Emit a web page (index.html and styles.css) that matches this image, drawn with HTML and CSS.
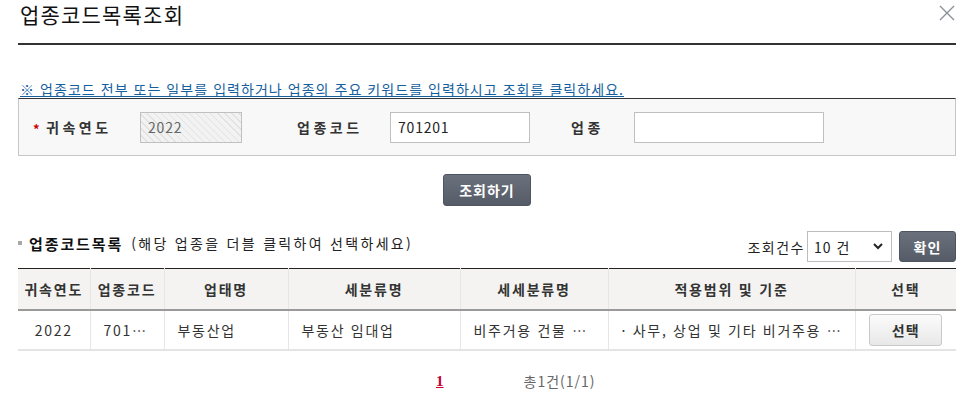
FILE: index.html
```html
<!DOCTYPE html>
<html lang="ko">

<head>
    <meta charset="UTF-8">
    <meta name="viewport" content="width=device-width, initial-scale=1.0">
    <title>업종코드목록조회</title>
    <link rel="stylesheet" href="styles.css">
</head>

<body>

    <div class="popup">
        <div class="pop-head">
            <h1 class="pop-title">업종코드목록조회</h1>
            <button class="btn-close" title="닫기">
                <svg width="16" height="16" viewBox="0 0 16 16">
                    <path d="M1 1 L15 15 M15 1 L1 15" stroke="#8b909a" stroke-width="1.4" fill="none" />
                </svg>
            </button>
        </div>

        <p class="notice">※ 업종코드 전부 또는 일부를 입력하거나 업종의 주요 키워드를 입력하시고 조회를 클릭하세요.</p>

        <div class="search-box">
            <span class="req">*</span>
            <label class="lbl lbl-year">귀속연도</label>
            <input class="inp inp-year" type="text" value="2022" disabled>
            <label class="lbl lbl-code">업종코드</label>
            <input class="inp inp-code" type="text" value="701201">
            <label class="lbl lbl-name">업종</label>
            <input class="inp inp-name" type="text" value="">
        </div>

        <div class="btn-row">
            <button class="btn-dark btn-search">조회하기</button>
        </div>

        <div class="list-head">
            <h2 class="list-title">
                <span class="bullet"></span>
                <strong>업종코드목록</strong>
                <span class="list-desc">(해당 업종을 더블 클릭하여 선택하세요)</span>
            </h2>
            <div class="list-opt">
                <span class="opt-label">조회건수</span>
                <div class="sel-wrap">
                    <select class="sel-count">
                        <option>10 건</option>
                        <option>20 건</option>
                        <option>50 건</option>
                    </select>
                    <svg class="sel-arrow" width="10" height="7" viewBox="0 0 10 7">
                        <path d="M1 1 L5 5 L9 1" stroke="#222" stroke-width="2" fill="none" />
                    </svg>
                </div>
                <button class="btn-dark btn-ok">확인</button>
            </div>
        </div>

        <table class="list-table">
            <colgroup>
                <col style="width: 72px">
                <col style="width: 74px">
                <col style="width: 124px">
                <col style="width: 172px">
                <col style="width: 148px">
                <col style="width: 247px">
                <col style="width: 101px">
            </colgroup>
            <thead>
                <tr>
                    <th>귀속연도</th>
                    <th>업종코드</th>
                    <th>업태명</th>
                    <th>세분류명</th>
                    <th>세세분류명</th>
                    <th>적용범위 및 기준</th>
                    <th>선택</th>
                </tr>
            </thead>
            <tbody>
                <tr>
                    <td class="center">2022</td>
                    <td>701201</td>
                    <td>부동산업</td>
                    <td>부동산 임대업</td>
                    <td>비주거용 건물 임대업</td>
                    <td>· 사무, 상업 및 기타 비거주용 건물 임대</td>
                    <td class="center"><button class="btn-light">선택</button></td>
                </tr>
            </tbody>
        </table>

        <div class="paging">
            <a class="page-on" href="#">1</a>
            <span class="total">총1건(1/1)</span>
        </div>
    </div>

</body>

</html>
```

FILE: styles.css
```css
body {
    margin: 0;
    background-color: #fff;
    font-family: "Noto Sans CJK KR", "Noto Sans", sans-serif;
    font-size: 14px;
    color: #333;
}

button,
input,
select {
    font-family: inherit;
}

.popup {
    padding: 0 14px 0 18px;
}

.pop-head {
    position: relative;
    height: 43px;
    border-bottom: 2px solid #333;
}

.pop-title {
    margin: 0;
    padding: 0 0 0 2px;
    font-size: 21px;
    font-weight: normal;
    line-height: 28px;
    letter-spacing: 1.2px;
    color: #111;
}

.btn-close {
    position: absolute;
    top: 5px;
    right: 1px;
    width: 16px;
    height: 16px;
    padding: 0;
    border: 0;
    background: none;
    cursor: pointer;
}

.btn-close svg {
    display: block;
}

.notice {
    margin: 35px 0 0 0;
    padding-left: 2px;
    height: 18px;
    line-height: 18px;
    font-size: 14px;
    letter-spacing: 1.05px;
    color: #14609e;
    text-decoration: underline;
    white-space: nowrap;
}

.search-box {
    display: flex;
    align-items: center;
    height: 56px;
    padding-left: 14px;
    border: 1px solid #c6c6c6;
    border-top: 1px solid #333;
    background-color: #f8f8f8;
}

.req {
    width: 13px;
    color: #d10000;
    font-weight: bold;
    font-size: 13px;
    line-height: 10px;
    padding-top: 4px;
}

.lbl {
    font-weight: bold;
    letter-spacing: 3.5px;
    color: #333;
    white-space: nowrap;
}

.lbl-year {
    width: 94px;
}

.lbl-code {
    margin-left: 55px;
    width: 93px;
}

.lbl-name {
    margin-left: 41px;
    width: 63px;
}

.inp {
    box-sizing: border-box;
    height: 31px;
    padding: 0 7px;
    border: 1px solid #c0c0c0;
    background-color: #fff;
    font-size: 14px;
    letter-spacing: 0.8px;
    color: #222;
    outline: none;
}

.inp-year {
    width: 102px;
    color: #666;
    -webkit-text-fill-color: #666;
    background: repeating-linear-gradient(45deg, #f2f2f2 0, #f2f2f2 4px, #e2e2e2 4px, #e2e2e2 5px);
}

.inp-code {
    width: 140px;
}

.inp-name {
    width: 190px;
}

.btn-row {
    display: flex;
    justify-content: center;
    margin-top: 18px;
}

.btn-dark {
    height: 32px;
    padding: 0;
    border: 1px solid #4f5560;
    border-radius: 3px;
    background: linear-gradient(#6b717c, #565c67);
    color: #fff;
    font-size: 14px;
    font-weight: bold;
    letter-spacing: 1px;
    cursor: pointer;
}

.btn-search {
    width: 88px;
}

.list-head {
    display: flex;
    justify-content: space-between;
    margin-top: 25px;
    height: 31px;
}

.list-title {
    display: flex;
    align-items: center;
    margin: 0;
    height: 24px;
    font-size: 14px;
    font-weight: normal;
    color: #222;
    white-space: nowrap;
}

.bullet {
    width: 4px;
    height: 4px;
    margin-right: 7px;
    background-color: #a8a8a8;
}

.list-title strong {
    font-size: 15px;
    letter-spacing: 1.9px;
    color: #111;
}

.list-desc {
    margin-left: 8px;
    letter-spacing: 2.3px;
}

.list-opt {
    display: flex;
    align-items: center;
}

.opt-label {
    letter-spacing: 1.5px;
    color: #222;
}

.sel-wrap {
    position: relative;
    margin-left: 2px;
}

.sel-count {
    display: block;
    box-sizing: border-box;
    width: 85px;
    height: 31px;
    padding: 0 0 0 6px;
    border: 1px solid #bdbdbd;
    border-radius: 0;
    background-color: #fff;
    font-size: 14px;
    letter-spacing: 1px;
    color: #222;
    -webkit-appearance: none;
    appearance: none;
}

.sel-arrow {
    position: absolute;
    top: 12px;
    right: 9px;
    pointer-events: none;
}

.btn-ok {
    width: 57px;
    height: 31px;
    margin-left: 7px;
}

.list-table {
    width: 100%;
    margin-top: 6px;
    border-collapse: collapse;
    table-layout: fixed;
    border-top: 1px solid #222;
}

.list-table th {
    height: 40px;
    padding: 0;
    background-color: #f4f3f2;
    border-left: 1px solid #e6e6e6;
    border-bottom: 2px solid #9a9a9a;
    font-weight: bold;
    letter-spacing: 1.8px;
    color: #333;
    white-space: nowrap;
}

.list-table td {
    height: 38px;
    padding: 0 13px;
    border-left: 1px solid #e6e6e6;
    border-bottom: 2px solid #e4e4e4;
    letter-spacing: 1.7px;
    color: #333;
    white-space: nowrap;
    overflow: hidden;
    text-overflow: ellipsis;
}

.list-table th:first-child,
.list-table td:first-child {
    border-left: 0;
}

.list-table td.center {
    text-align: center;
    padding: 0;
}

.btn-light {
    width: 73px;
    height: 32px;
    padding: 0;
    border: 1px solid #c9c9c9;
    border-radius: 3px;
    background: linear-gradient(#fbfbfb, #e8e8e8);
    font-size: 14px;
    font-weight: bold;
    color: #333;
    letter-spacing: 1px;
    cursor: pointer;
}

.paging {
    display: flex;
    align-items: center;
    margin-top: 20px;
    height: 20px;
    padding-left: 418px;
}

.page-on {
    font-family: "Liberation Serif", serif;
    font-weight: bold;
    font-size: 15px;
    color: #c8002e;
    text-decoration: underline;
}

.total {
    margin-left: 80px;
    font-size: 14px;
    letter-spacing: 1px;
    color: #666;
}
```
